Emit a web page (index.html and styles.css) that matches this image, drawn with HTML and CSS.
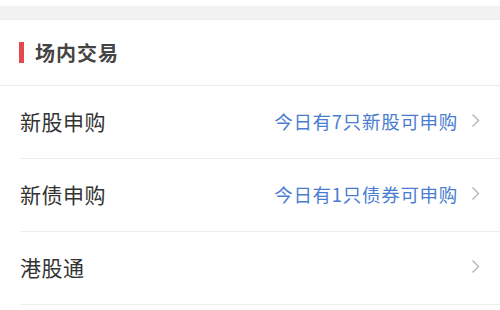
FILE: index.html
```html
<!DOCTYPE html>
<html lang="zh-CN">
<head>
    <meta charset="UTF-8">
    <meta name="viewport" content="width=device-width, initial-scale=1.0">
    <title>场内交易</title>
    <link rel="stylesheet" href="styles.css">
</head>
<body>
    <div class="gap"></div>
    <div class="section">
        <div class="section-title">
            <span class="mark"></span>
            <h2>场内交易</h2>
        </div>
        <ul class="list">
            <li class="item">
                <span class="name">新股申购</span>
                <span class="hint">今日有7只新股可申购</span>
                <svg class="arrow" viewBox="0 0 9 15"><polyline points="1.5,1.5 7.5,7.5 1.5,13.5"/></svg>
            </li>
            <li class="item">
                <span class="name">新债申购</span>
                <span class="hint">今日有1只债券可申购</span>
                <svg class="arrow" viewBox="0 0 9 15"><polyline points="1.5,1.5 7.5,7.5 1.5,13.5"/></svg>
            </li>
            <li class="item">
                <span class="name">港股通</span>
                <span class="hint"></span>
                <svg class="arrow" viewBox="0 0 9 15"><polyline points="1.5,1.5 7.5,7.5 1.5,13.5"/></svg>
            </li>
        </ul>
    </div>
</body>
</html>
```

FILE: styles.css
```css
body {
    margin: 0;
    padding-top: 6px;
    background: #fff;
    font-family: "Noto Sans CJK SC", "Noto Sans", sans-serif;
    color: #333;
}
.gap {
    height: 13px;
    background: #f2f2f2;
    border-bottom: 1px solid #ececec;
}
.section {
    background: #fff;
}
.section-title {
    display: flex;
    align-items: center;
    height: 65px;
    padding-left: 19px;
    border-bottom: 1px solid #ececec;
}
.mark {
    width: 5px;
    height: 21px;
    background: #e5484d;
    margin-right: 11px;
}
h2 {
    margin: 0;
    font-size: 20px;
    font-weight: bold;
    color: #444;
    letter-spacing: 1px;
}
.list {
    list-style: none;
    margin: 0 0 0 20px;
    padding: 0;
}
.item {
    display: flex;
    align-items: center;
    height: 72px;
    padding-right: 20px;
    border-bottom: 1px solid #ececec;
}
.name {
    flex: 1;
    font-size: 21px;
    color: #333;
    letter-spacing: 0.5px;
    margin-top: -3px;
}
.hint {
    font-size: 18.5px;
    color: #4a7dd0;
    margin-right: 13px;
    letter-spacing: 0.7px;
    margin-top: -3px;
}
.arrow {
    width: 9px;
    height: 15px;
    fill: none;
    stroke: #b5b5b5;
    stroke-width: 1.4;
    margin-top: -3px;
}
```
